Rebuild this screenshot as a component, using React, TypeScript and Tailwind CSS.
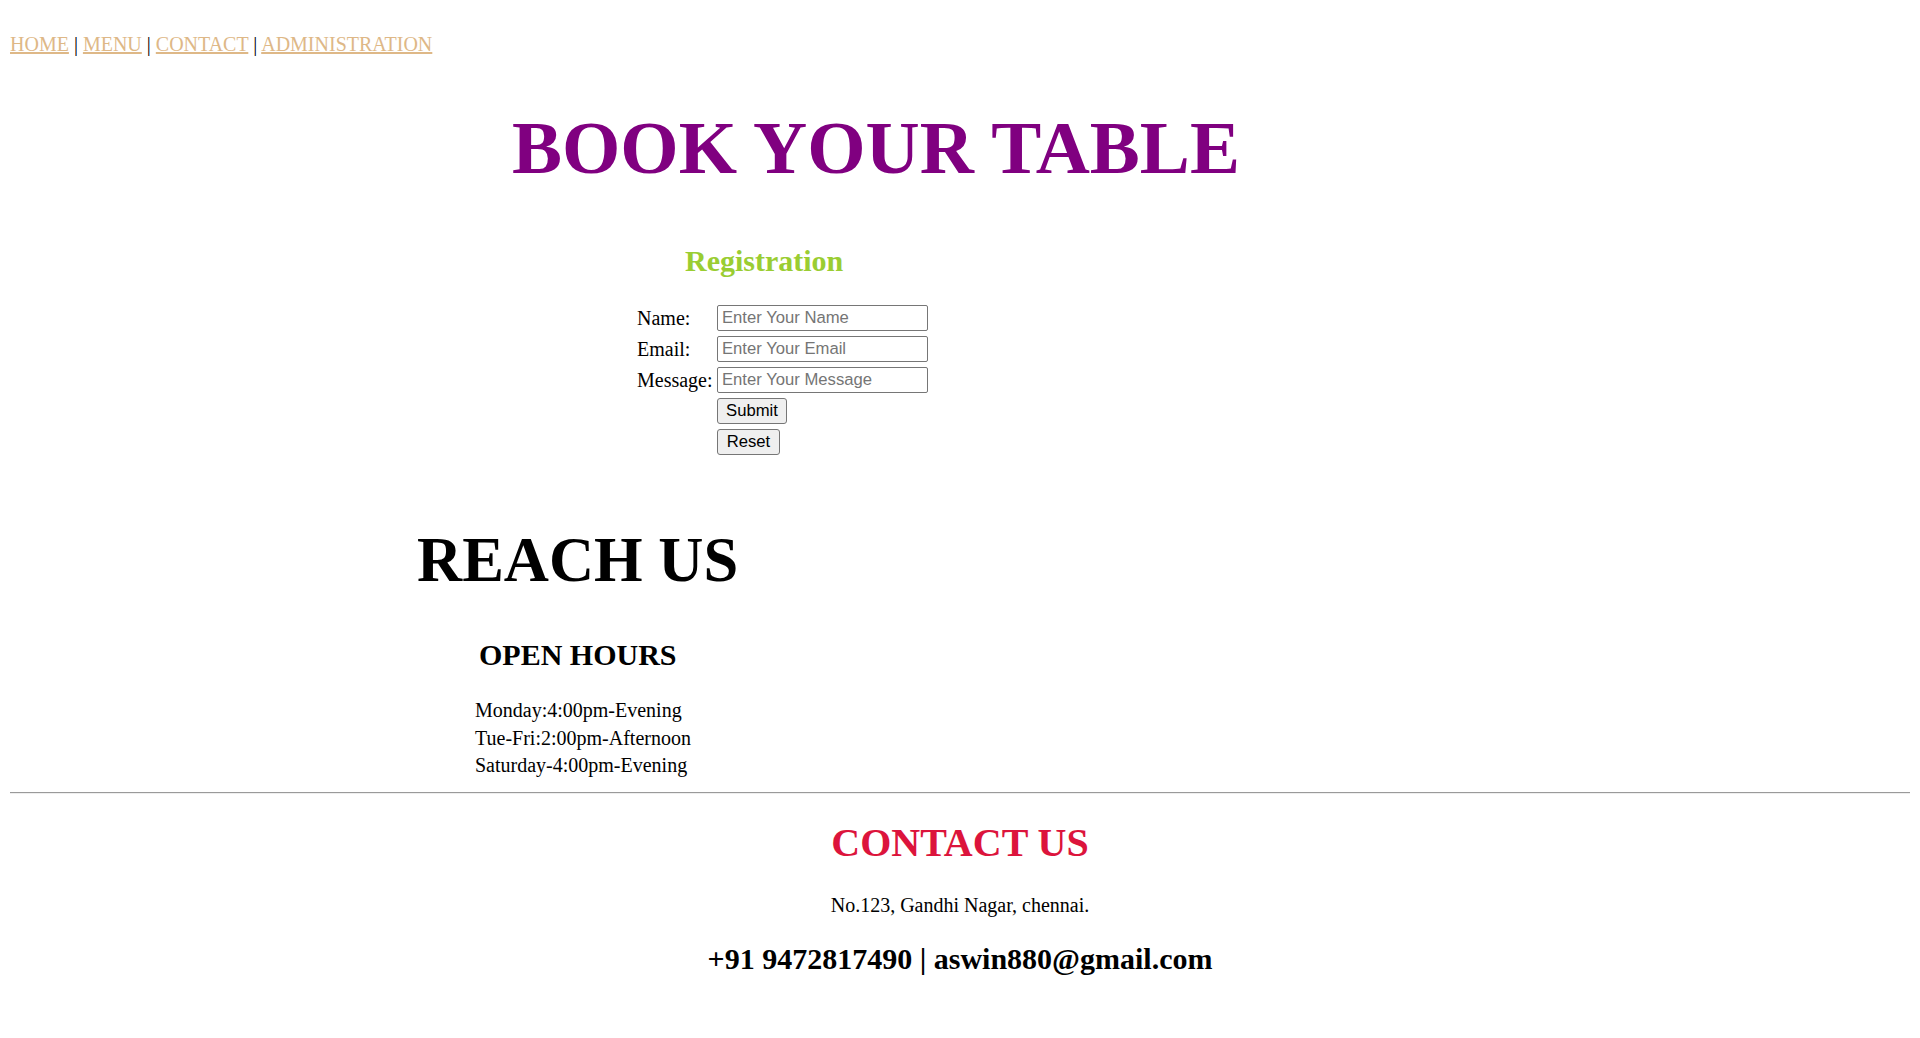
import React from "react";

const inputCls =
  "block h-[26px] w-[211px] border border-[#767676] rounded-[2px] pl-[4px] pr-[2px] font-['Liberation_Sans',Arial,sans-serif] text-[16.67px] leading-[20px] placeholder:text-[#757575] outline-none";

export default function App() {
  return (
    <div className="min-h-screen bg-white text-black font-['Liberation_Serif','Times_New_Roman',serif]">
      <nav className="pt-[33px] pl-[10px] text-[20px] leading-[23px]">
        <a href="#" className="text-[#deb887] underline">HOME</a>
        <span> | </span>
        <a href="#" className="text-[#deb887] underline">MENU</a>
        <span> | </span>
        <a href="#" className="text-[#deb887] underline">CONTACT</a>
        <span> | </span>
        <a href="#" className="text-[#deb887] underline">ADMINISTRATION</a>
      </nav>

      <h1 className="mt-[49px] ml-[512px] text-[75px] leading-[86px] font-bold text-[#800080] whitespace-nowrap">
        BOOK YOUR TABLE
      </h1>

      <h2 className="mt-[51.5px] ml-[685px] text-[30px] leading-[35px] font-bold text-[#9acd32]">
        Registration
      </h2>

      <form
        className="mt-[27.6px] ml-[637px] grid grid-cols-[80px_211px] gap-y-[5px] text-[20px] leading-[26px]"
        onSubmit={(e) => e.preventDefault()}
      >
        <label className="h-[26px]">Name:</label>
        <input type="text" placeholder="Enter Your Name" className={inputCls} />
        <label className="h-[26px]">Email:</label>
        <input type="text" placeholder="Enter Your Email" className={inputCls} />
        <label className="h-[26px]">Message:</label>
        <input type="text" placeholder="Enter Your Message" className={inputCls} />
        <div className="h-[26px]" />
        <div className="flex h-[26px]">
          <button
            type="submit"
            className="block h-[26px] w-[70px] bg-[#efefef] border border-[#767676] rounded-[3px] font-['Liberation_Sans',Arial,sans-serif] text-[16.67px] leading-[20px] text-black"
          >
            Submit
          </button>
        </div>
        <div className="h-[26px]" />
        <div className="flex h-[26px]">
          <button
            type="reset"
            className="block h-[26px] w-[63px] bg-[#efefef] border border-[#767676] rounded-[3px] font-['Liberation_Sans',Arial,sans-serif] text-[16.67px] leading-[20px] text-black"
          >
            Reset
          </button>
        </div>
      </form>

      <h1 className="mt-[69px] ml-[417px] text-[62.5px] leading-[72px] font-bold whitespace-nowrap">
        REACH US
      </h1>

      <h2 className="mt-[41.4px] ml-[479px] text-[30px] leading-[35px] font-bold">
        OPEN HOURS
      </h2>

      <div className="mt-[25px] ml-[475px] flex flex-col text-[20px] leading-[27.5px]">
        <div>Monday:4:00pm-Evening</div>
        <div>Tue-Fri:2:00pm-Afternoon</div>
        <div>Saturday-4:00pm-Evening</div>
      </div>

      <hr className="mt-[12px] mx-[10px] border-0 border-t border-t-[#9a9a9a] border-b border-b-[#eeeeee]" />

      <footer className="flex flex-col items-center text-center">
        <h1 className="mt-[26.2px] text-[40px] leading-[46px] font-bold text-[#dc143c]">
          CONTACT US
        </h1>
        <p className="mt-[28.3px] text-[20px] leading-[23px]">No.123, Gandhi Nagar, chennai.</p>
        <h2 className="mt-[23.9px] text-[30px] leading-[35px] font-bold">
          +91 9472817490 | aswin880@gmail.com
        </h2>
      </footer>
    </div>
  );
}
